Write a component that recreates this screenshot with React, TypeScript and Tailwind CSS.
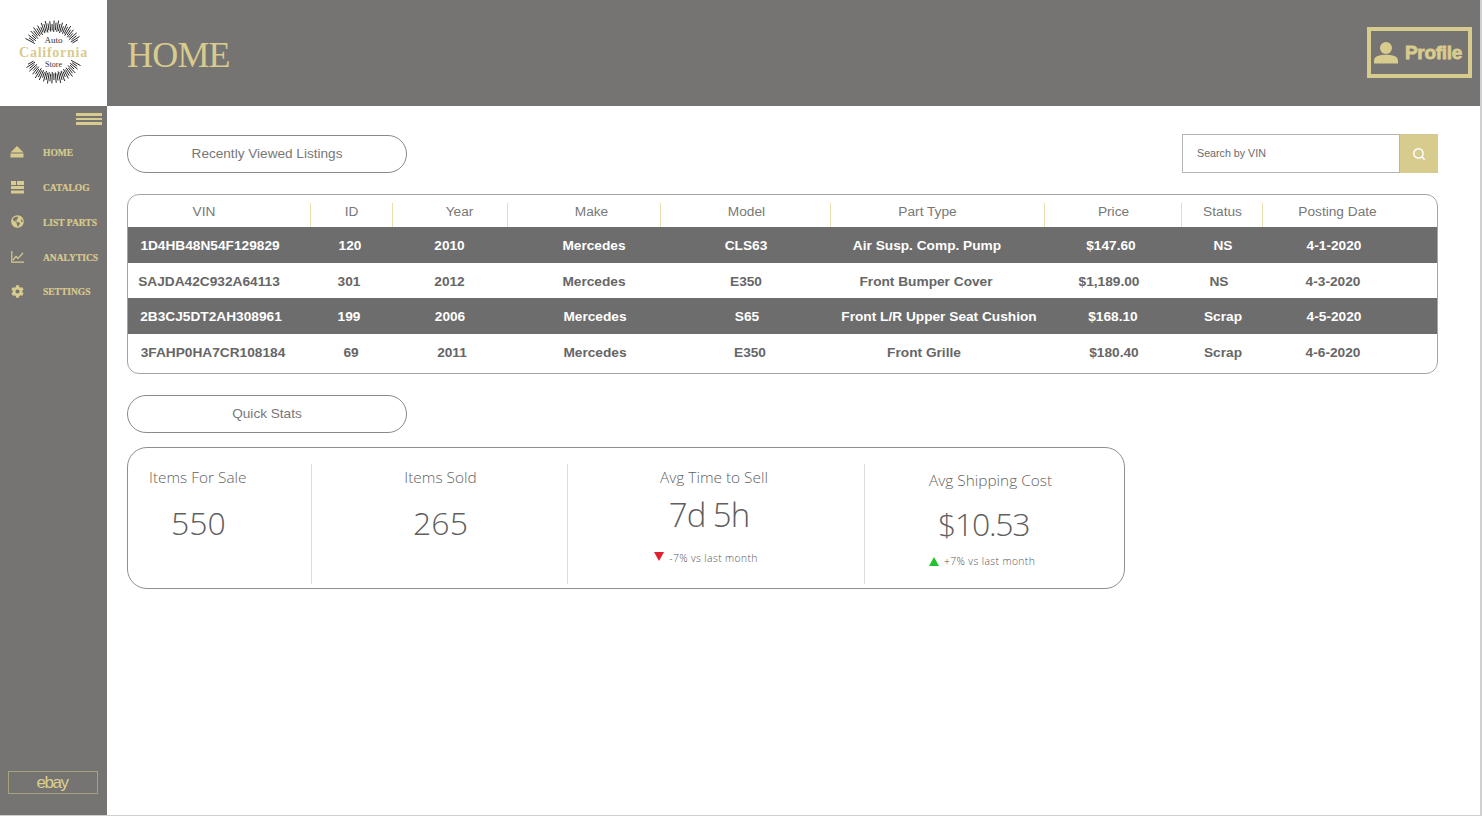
import { FaCog, FaGlobeAmericas } from 'react-icons/fa';
import { Search } from 'lucide-react';

const SERIF = "font-['Liberation_Serif',serif]";
const HEADER_COLUMNS = 'grid grid-cols-[183px_82px_115px_153px_170px_214px_137px_81px_1fr]';
const COLUMNS = 'grid grid-cols-[182px_82px_115px_153px_170px_214px_137px_81px_1fr]';

const HEADERS = [
  ['VIN', 'pr-[30px]'],
  ['ID', ''],
  ['Year', 'pl-[19px]'],
  ['Make', 'pl-[15px]'],
  ['Model', 'pl-[2px]'],
  ['Part Type', 'pr-[20px]'],
  ['Price', 'pl-[1px]'],
  ['Status', 'pl-[1px]'],
  ['Posting Date', 'pr-[25px]'],
];

const ROWS = [
  {
    className: 'h-[36px] pt-[2px] bg-[#6d6d6d] text-white',
    cells: [
      ['1D4HB48N54F129829', 'pr-[18px]'],
      ['120', 'pr-[2px]'],
      ['2010', ''],
      ['Mercedes', 'pl-[21px]'],
      ['CLS63', 'pl-[2px]'],
      ['Air Susp. Comp. Pump', 'pr-[20px]'],
      ['$147.60', 'pr-[3px]'],
      ['NS', 'pl-[3px]'],
      ['4-1-2020', 'pr-[31px]'],
    ],
  },
  {
    className: 'h-[35px] pt-[4px] text-[#666666]',
    cells: [
      ['SAJDA42C932A64113', 'pr-[20px]'],
      ['301', 'pr-[4px]'],
      ['2012', ''],
      ['Mercedes', 'pl-[21px]'],
      ['E350', 'pl-[2px]'],
      ['Front Bumper Cover', 'pr-[22px]'],
      ['$1,189.00', 'pr-[7px]'],
      ['NS', 'pr-[5px]'],
      ['4-3-2020', 'pr-[33px]'],
    ],
  },
  {
    className: 'h-[36px] pt-[2px] bg-[#6d6d6d] text-white',
    cells: [
      ['2B3CJ5DT2AH308961', 'pr-[16px]'],
      ['199', 'pr-[4px]'],
      ['2006', 'pl-[1px]'],
      ['Mercedes', 'pl-[23px]'],
      ['S65', 'pl-[4px]'],
      ['Front L/R Upper Seat Cushion', 'pl-[4px]'],
      ['$168.10', 'pl-[1px]'],
      ['Scrap', 'pl-[3px]'],
      ['4-5-2020', 'pr-[31px]'],
    ],
  },
  {
    className: 'h-[39px] pb-[1px] text-[#666666]',
    cells: [
      ['3FAHP0HA7CR108184', 'pr-[12px]'],
      ['69', ''],
      ['2011', 'pl-[5px]'],
      ['Mercedes', 'pl-[23px]'],
      ['E350', 'pl-[10px]'],
      ['Front Grille', 'pr-[26px]'],
      ['$180.40', 'pl-[3px]'],
      ['Scrap', 'pl-[3px]'],
      ['4-6-2020', 'pr-[33px]'],
    ],
  },
];

const rays = (from: number, to: number, count: number, r1: number, r2: number) =>
  Array.from({ length: count }, (_, i) => {
    const deg = from + ((to - from) * i) / (count - 1);
    const a = (deg * Math.PI) / 180;
    const jitter = [0, 3, 1, 4, 0.5, 2.5][i % 6];
    const inner = [0, 2, 0.5, 1.5][i % 4];
    return {
      x1: 53 + Math.cos(a) * (r1 + inner),
      y1: 52 + Math.sin(a) * (r1 + inner),
      x2: 53 + Math.cos(a) * (r2 - jitter) * 0.95,
      y2: 52 + Math.sin(a) * (r2 - jitter),
    };
  });

const Logo = () => (
  <div className="relative h-[106px] w-[107px] shrink-0 bg-white">
    <svg width="107" height="106" viewBox="0 0 107 106" className="block">
      {[...rays(-155, -25, 32, 20, 32), ...rays(25, 155, 32, 20, 32)].map((l, i) => (
        <line key={i} {...l} stroke="#262626" strokeWidth="1" />
      ))}
    </svg>
    <div className={`absolute inset-0 flex flex-col items-center justify-center pb-[2px] ${SERIF}`}>
      <span className="pt-[1px] text-[9px] leading-[10px] text-[#333333]">Auto</span>
      <span className="text-[14px] font-bold leading-[15px] tracking-[0.75px] text-[#d8cb8e]">California</span>
      <span className="text-[8px] leading-[10px] text-[#333333]">Store</span>
    </div>
  </div>
);

const HomeIcon = () => (
  <svg width="14" height="12" viewBox="0 0 14 12" fill="#d8cb8e">
    <path d="M7 0 13.5 6.5H.5z" />
    <rect x="0.5" y="7.5" width="13" height="4" />
  </svg>
);

const CatalogIcon = () => (
  <svg width="13" height="13" viewBox="0 0 13 13" fill="#d8cb8e">
    <rect width="5" height="4" />
    <rect x="6" width="7" height="4" />
    <rect y="5" width="13" height="3" />
    <rect y="9.5" width="13" height="3" />
  </svg>
);

const ChartIcon = () => (
  <svg width="13" height="12" viewBox="0 0 13 12" fill="none" stroke="#d8cb8e" strokeWidth="1.2">
    <path d="M.8 0v11.2H13" />
    <path d="M2 9 5 5.5l2 2L12 2" />
  </svg>
);

const NAV = [
  { label: 'HOME', icon: <HomeIcon /> },
  { label: 'CATALOG', icon: <CatalogIcon /> },
  { label: 'LIST PARTS', icon: <FaGlobeAmericas size={13} color="#d8cb8e" /> },
  { label: 'ANALYTICS', icon: <ChartIcon /> },
  { label: 'SETTINGS', icon: <FaCog size={13} color="#d8cb8e" /> },
];

const Sidebar = () => (
  <aside className="flex w-[107px] shrink-0 flex-col bg-[#757472]">
    <div className="flex justify-end pr-[5px] pt-[7px]">
      <div className="flex w-[26px] flex-col gap-[2px]">
        <span className="h-[2.5px] bg-[#d8cb8e]" />
        <span className="h-[2.5px] bg-[#d8cb8e]" />
        <span className="h-[2.5px] bg-[#d8cb8e]" />
      </div>
    </div>
    <nav className="mt-[11.5px] flex flex-col">
      {NAV.map((item) => (
        <div key={item.label} className="flex h-[34.75px] items-center">
          <span className="-mt-[2px] flex w-[43px] justify-center pr-[9px]">{item.icon}</span>
          <span className={`text-[9.5px] font-bold text-[#d8cb8e] [-webkit-text-stroke:0.2px_#d8cb8e] ${SERIF}`}>
            {item.label}
          </span>
        </div>
      ))}
    </nav>
    <div className="mt-auto mb-[21px] ml-[8px] flex h-[23px] w-[90px] items-center justify-center border-[1.5px] border-[#a8a181]">
      <span className="pr-[2px] text-[17px] tracking-[-1.5px] text-[#dcd08f]">ebay</span>
    </div>
  </aside>
);

const Pill = ({ label }: { label: string }) => (
  <div className="flex h-[38px] w-[280px] items-center justify-center rounded-full border border-[#8a8a8a] text-[13.6px] text-[#777777]">
    {label}
  </div>
);

const ListingsTable = () => (
  <div className="mt-[21px] h-[180px] w-[1311px] overflow-hidden rounded-[12px] border border-[#a5a5a5] text-[13.7px]">
    <div className={`${HEADER_COLUMNS} h-[32px]`}>
      {HEADERS.map(([label, offset], i) => (
        <div
          key={label}
          className={`mt-[8px] flex h-[24px] items-center justify-center text-[#777777] ${offset} ${
            i < 8 ? 'border-r border-[#eadfb0]' : ''
          }`}
        >
          <span className="-mt-[6px]">{label}</span>
        </div>
      ))}
    </div>
    {ROWS.map((row) => (
      <div key={row.cells[0][0]} className={`${COLUMNS} items-center font-bold ${row.className}`}>
        {row.cells.map(([text, offset], i) => (
          <div key={i} className={`text-center ${offset}`}>
            {text}
          </div>
        ))}
      </div>
    ))}
  </div>
);

const Trend = ({ up, text }: { up?: boolean; text: string }) => (
  <div className="flex items-center gap-[5px] text-[10.3px] font-light tracking-[0.4px] text-[#555555]">
    <svg width="10" height="9" viewBox="0 0 10 9" className={up ? 'mt-0' : '-mt-[4px]'}>
      {up ? <path d="M5 0 10 9H0z" fill="#22c42e" /> : <path d="M0 0h10L5 9z" fill="#e0202e" />}
    </svg>
    {text}
  </div>
);

const QuickStats = () => (
  <div className="mt-[14px] flex h-[142px] w-[998px] rounded-[20px] border border-[#8f8f8f] pt-[16px] pb-[4px] font-['Open_Sans',sans-serif] font-light text-[#5f5f5f]">
    <div className="w-[184px] border-r border-[#dddddd] pl-[21px]">
      <div className="pt-[1px] text-[15.4px] leading-[26px]">Items For Sale</div>
      <div className="mt-[10px] pl-[22px] text-[32px] leading-[44px]">550</div>
    </div>
    <div className="w-[256px] border-r border-[#dddddd] text-center">
      <div className="pl-[2px] pt-[1px] text-[15.4px] leading-[26px]">Items Sold</div>
      <div className="mt-[10px] pl-[2px] text-[32px] leading-[44px]">265</div>
    </div>
    <div className="flex w-[297px] flex-col items-center border-r border-[#dddddd]">
      <div className="pr-[4px] pt-[1px] text-[15.4px] leading-[26px]">Avg Time to Sell</div>
      <div className="mt-[1px] pr-[14px] text-[33px] leading-[46px] tracking-[-1px]">7d 5h</div>
      <div className="mt-[13px] pr-[20px]">
        <Trend text="-7% vs last month" />
      </div>
    </div>
    <div className="flex flex-1 flex-col pl-[64px]">
      <div className="mt-[4px] text-[15.4px] leading-[26px]">Avg Shipping Cost</div>
      <div className="mt-[8px] pl-[9px] text-[32px] leading-[44px] tracking-[-1.3px]">$10.53</div>
      <div className="mt-[8px]">
        <Trend up text="+7% vs last month" />
      </div>
    </div>
  </div>
);

export default function App() {
  return (
    <div className="flex h-[816px] w-[1482px] flex-col overflow-hidden border-r-2 border-b border-[#d0d0d0] bg-white font-['Liberation_Sans',Arial,sans-serif]">
      <header className="flex h-[106px] shrink-0 bg-[#757472]">
        <Logo />
        <div className="flex flex-1 items-center justify-between pl-[20px] pr-[8px]">
          <h1 className={`pt-[4px] text-[36px] tracking-[-0.8px] text-[#d8cb8e] ${SERIF}`}>HOME</h1>
          <div className="-mt-[1px] flex h-[51px] w-[105px] items-center gap-[7px] border-4 border-[#d8cb8e] pl-[3px]">
            <svg width="24" height="23" viewBox="0 0 26 24" fill="#d8cb8e">
              <circle cx="13" cy="7" r="6.5" />
              <path d="M0 24v-3c0-5 6-6.5 13-6.5S26 16 26 21v3z" />
            </svg>
            <span className="pt-[2px] text-[19px] font-bold tracking-[-0.3px] text-[#d8cb8e] [-webkit-text-stroke:0.8px_#d8cb8e]">
              Profile
            </span>
          </div>
        </div>
      </header>
      <div className="flex min-h-0 flex-1">
        <Sidebar />
        <main className="flex-1 pl-[20px] pt-[28px]">
          <div className="flex h-[39px] w-[1311px] items-center justify-between">
            <div className="pt-[1px]">
              <Pill label="Recently Viewed Listings" />
            </div>
            <div className="flex h-[39px] w-[256px]">
              <div className="flex flex-1 items-center border border-[#b5b5b5] pl-[14px] text-[10.7px] text-[#6b6b6b]">
                Search by VIN
              </div>
              <div className="flex w-[38px] items-center justify-center bg-[#d8cb8e]">
                <Search size={14} color="#ffffff" strokeWidth={2.5} />
              </div>
            </div>
          </div>
          <ListingsTable />
          <div className="mt-[21px]">
            <Pill label="Quick Stats" />
          </div>
          <QuickStats />
        </main>
      </div>
    </div>
  );
}
